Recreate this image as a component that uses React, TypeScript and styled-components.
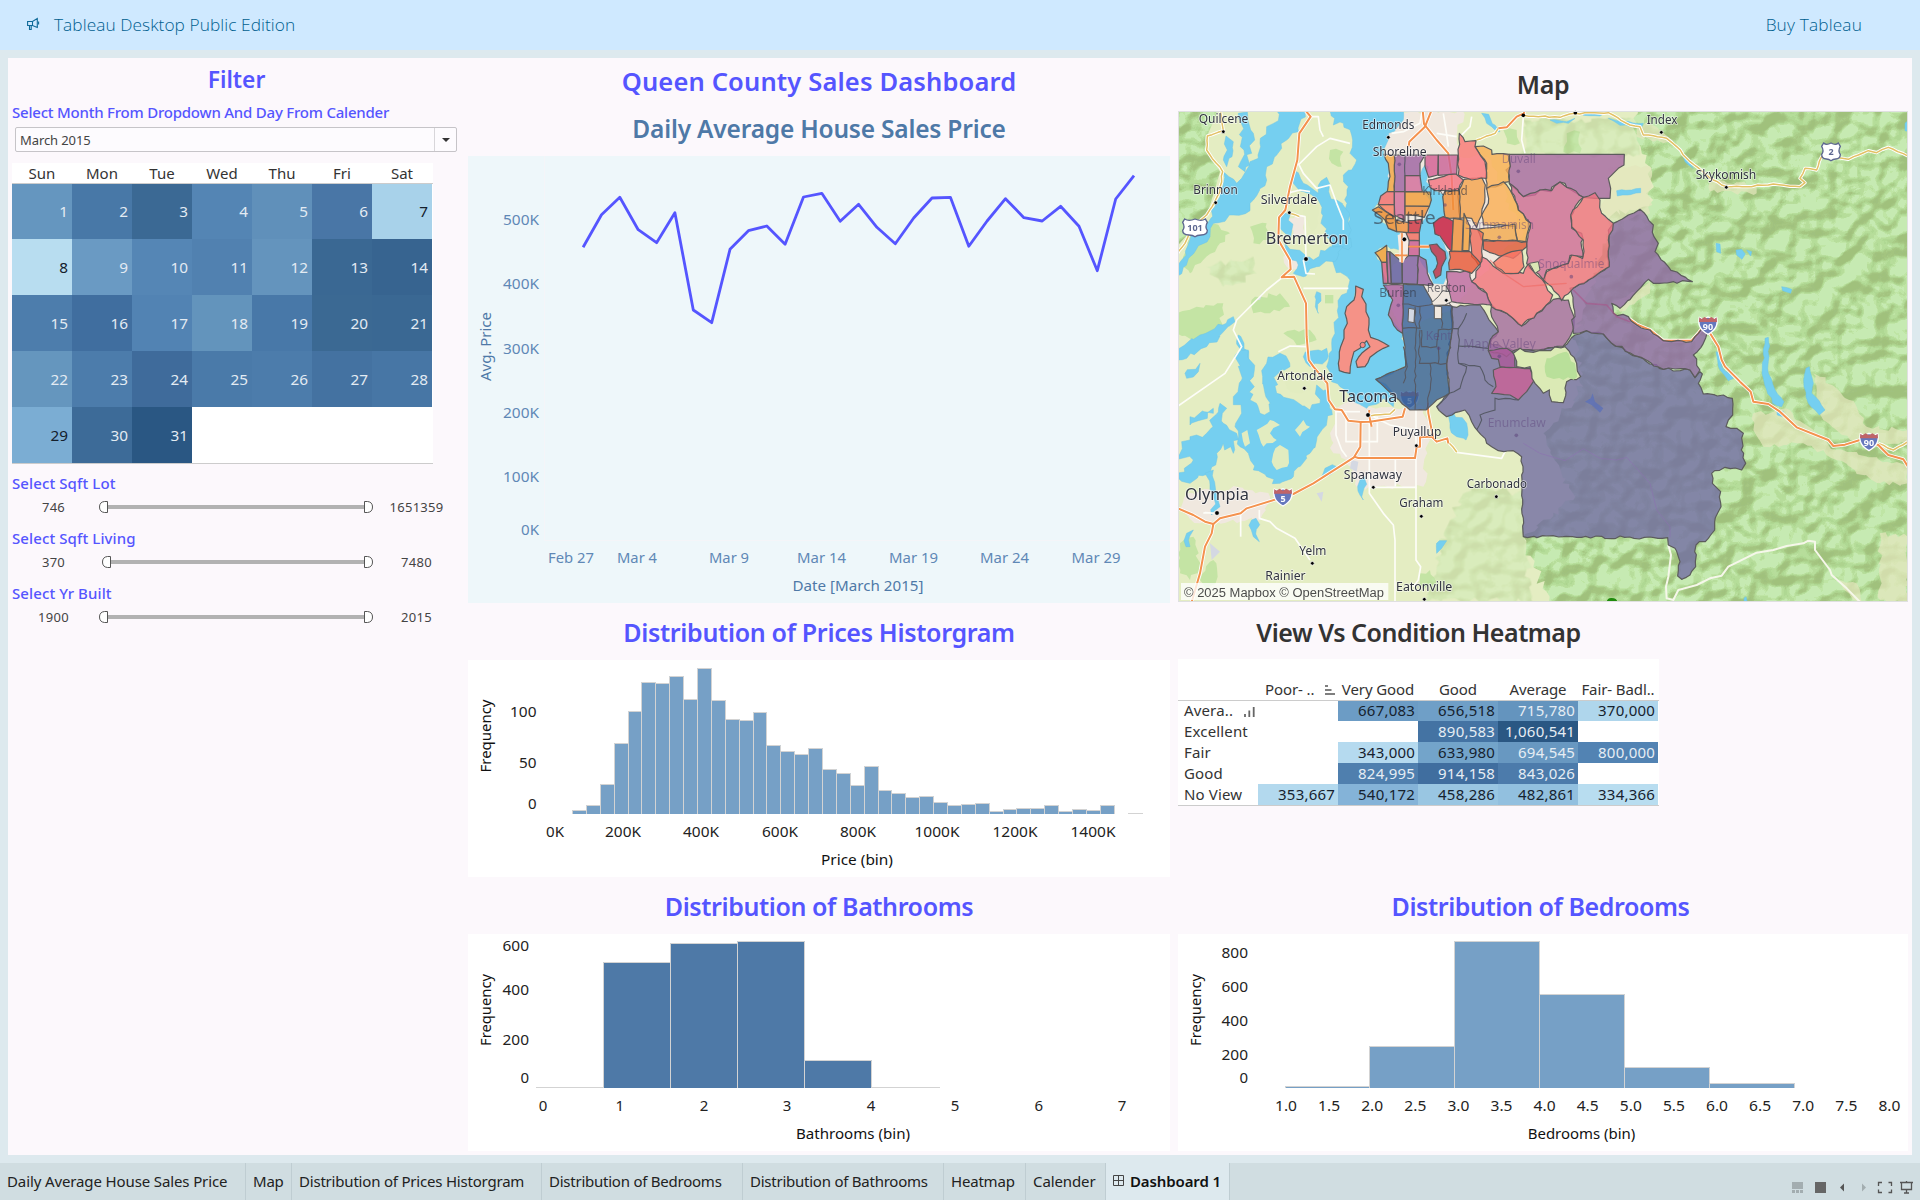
import React from "react";
import styled, { createGlobalStyle } from "styled-components";

const FONT = '"Noto Sans", "Open Sans", sans-serif';
const VIOLET = "#5555ff";
const STEEL = "#4e79a7";

const GlobalStyle = createGlobalStyle`
  * { box-sizing: border-box; }
  body { margin: 0; background: #dde9ee; font-family: ${FONT}; color: #333; }
  svg { display: block; }
`;

/* ---------- shell ---------- */

const Page = styled.div`
  display: flex;
  flex-direction: column;
  width: 1920px;
  height: 1200px;
  overflow: hidden;
  background: #dde9ee;
`;

const Banner = styled.header`
  display: flex;
  align-items: center;
  height: 50px;
  padding: 0 58px 2px 27px;
  background: #cfe9ff;
  color: #005f8f;
  font-family: "Open Sans", ${FONT};
  font-size: 17.3px;
  font-weight: 300;
  svg { margin-right: 14px; }
`;

const BannerTitle = styled.span`
  letter-spacing: 0.06px;
`;

const BannerLink = styled.a`
  margin-left: auto;
  letter-spacing: 0.15px;
`;

const Dashboard = styled.main`
  display: flex;
  width: 1904px;
  height: 1097px;
  margin: 8px 8px 0;
  background: #fcf8fc;
`;

const FilterColumn = styled.section`
  width: 460px;
  padding-left: 4px;
`;

const CenterColumn = styled.section`
  display: flex;
  flex-direction: column;
  width: 702px;
`;

const RightColumn = styled.section`
  display: flex;
  flex-direction: column;
  width: 730px;
  margin-left: 8px;
`;

const Title = styled.h2<{ $h: number; $lh: number; $color?: string; $size?: number; $w?: number; $ls?: number; $dx?: number }>`
  flex: none;
  margin: 0;
  height: ${(p) => p.$h}px;
  width: ${(p) => (p.$w ? `${p.$w}px` : "auto")};
  padding-right: ${(p) => p.$dx ?? 0}px;
  line-height: ${(p) => p.$lh}px;
  text-align: center;
  white-space: nowrap;
  font-size: ${(p) => p.$size ?? 25}px;
  font-weight: 600;
  letter-spacing: ${(p) => p.$ls ?? 0}px;
  color: ${(p) => p.$color ?? VIOLET};
`;

/* ---------- filters ---------- */

const FilterLabel = styled.div<{ $h: number; $ls?: number }>`
  height: ${(p) => p.$h}px;
  line-height: ${(p) => p.$h}px;
  font-size: 15px;
  font-weight: 500;
  letter-spacing: ${(p) => p.$ls ?? 0.1}px;
  color: ${VIOLET};
  white-space: nowrap;
`;

const Select = styled.div`
  display: flex;
  align-items: center;
  width: 442px;
  height: 25px;
  margin-left: 3px;
  padding-left: 4px;
  border: 1px solid #c6c4c8;
  border-radius: 2px;
  background: #fdfbfe;
  font-size: 13px;
  letter-spacing: -0.1px;
  color: #444;
`;

const SelectArrow = styled.span`
  display: flex;
  align-items: center;
  justify-content: center;
  width: 22px;
  height: 100%;
  margin-left: auto;
  border-left: 1px solid #d8d6da;
  &::before {
    content: "";
    border: 4px solid transparent;
    border-top-color: #333;
    border-bottom: 0;
  }
`;

const Calendar = styled.div`
  width: 421px;
  margin-top: 11px;
  background: #fff;
  border-bottom: 1px solid #ccc;
`;

const WeekHead = styled.div`
  display: grid;
  grid-template-columns: repeat(7, 60px);
  height: 21px;
  border-bottom: 1px solid #ccc;
  line-height: 21px;
  text-align: center;
  font-size: 15px;
  color: #333;
`;

const Days = styled.div`
  display: grid;
  grid-template-columns: repeat(7, 60px);
  grid-template-rows: 55px repeat(4, 56px);
`;

const Day = styled.div<{ $bg: string; $dark?: boolean }>`
  display: flex;
  align-items: center;
  justify-content: flex-end;
  padding: 0 4px 1px 0;
  background: ${(p) => p.$bg};
  color: ${(p) => (p.$dark ? "#14202c" : "#e3ebf3")};
  font-size: 15.3px;
`;

const Sliders = styled.div`
  display: flex;
  flex-direction: column;
  gap: 7px;
  padding-top: 7px;
`;

const SliderRow = styled.div`
  display: grid;
  grid-template-columns: 83px 282px 79px;
  align-items: center;
  height: 24px;
  text-align: center;
  font-size: 13px;
  letter-spacing: 0.3px;
  color: #444;
`;

/* ---------- panels ---------- */

const Panel = styled.div<{ $bg?: string; $h: number }>`
  flex: none;
  height: ${(p) => p.$h}px;
  background: ${(p) => p.$bg ?? "#fff"};
`;

const MapSvg = styled.svg`
  overflow: visible;
`;

const Heat = styled.div`
  width: 481px;
  height: 147px;
  padding-top: 21px;
  margin-bottom: 71px;
  background: #fff;
  border-bottom: 1px solid #ccc;
  font-size: 15px;
  color: #333;
`;

const HeatHead = styled.div`
  display: grid;
  grid-template-columns: repeat(6, 80px);
  height: 21px;
  border-bottom: 1px solid #ccc;
  line-height: 19px;
  text-align: center;
  white-space: nowrap;
  letter-spacing: -0.1px;
`;

const HeadSort = styled.span`
  display: flex;
  justify-content: space-between;
  align-items: center;
  height: 19px;
  padding: 0 3px 0 7px;
`;

const HeatRow = styled.div<{ $first: boolean }>`
  display: grid;
  grid-template-columns: repeat(6, 80px);
  height: ${(p) => (p.$first ? 20 : 21)}px;
  line-height: ${(p) => (p.$first ? 18 : 20)}px;
`;

const HeatName = styled.span`
  display: flex;
  justify-content: space-between;
  padding: 0 3px 0 6px;
  white-space: nowrap;
  letter-spacing: 0.15px;
  svg { margin-top: 5px; }
`;

const HeatCell = styled.span<{ $bg?: string; $light?: boolean }>`
  padding-right: 3px;
  text-align: right;
  background: ${(p) => p.$bg ?? "transparent"};
  color: ${(p) => (p.$light ? "#e6edf4" : "#16222e")};
  letter-spacing: 0.2px;
`;

/* ---------- sheet tabs ---------- */

const TabBar = styled.nav`
  display: flex;
  height: 37px;
  margin-top: 8px;
  background: #d0dde1;
`;

const Tab = styled.div<{ $w: number; $active?: boolean; $ls?: number }>`
  display: flex;
  align-items: center;
  width: ${(p) => p.$w}px;
  height: 37px;
  padding: 0 0 1px 7px;
  border-right: 1px solid #bfcdd2;
  background: ${(p) => (p.$active ? "#dde9ee" : "transparent")};
  font-size: 15px;
  font-weight: ${(p) => (p.$active ? 600 : 400)};
  letter-spacing: ${(p) => p.$ls ?? -0.2}px;
  white-space: nowrap;
  color: ${(p) => (p.$active ? "#111" : "#222")};
  svg { margin-right: 5px; }
`;

const TabTools = styled.div`
  margin-left: auto;
  padding-top: 17px;
`;

/* ---------- chart text ---------- */

type TProps = { x: number; y: number; w?: number; fill?: string; size?: number; anchor?: "start" | "middle" | "end"; weight?: number; children: React.ReactNode };
const T = ({ x, y, w, fill = "#222", size = 15, anchor = "middle", weight = 400, children }: TProps) => (
  <text x={x} y={y} fill={fill} fontSize={size} fontWeight={weight} textAnchor={anchor} fontFamily={FONT}
    {...(w ? { textLength: w, lengthAdjust: "spacingAndGlyphs" } : {})}>{children}</text>
);
const VT = ({ x, y, w, fill = "#111", children }: { x: number; y: number; w: number; fill?: string; children: React.ReactNode }) => (
  <text transform={`translate(${x} ${y}) rotate(-90)`} fill={fill} fontSize={15} textAnchor="middle" fontFamily={FONT}
    textLength={w} lengthAdjust="spacingAndGlyphs">{children}</text>
);

/* ---------- charts ---------- */

const lineRaw = [592, 494, 442, 539, 578, 488, 780, 818, 598, 542, 528, 583, 441, 430, 514, 463, 532, 581, 504, 444, 442, 589, 513, 446, 503, 513, 469, 529, 662, 447, 377];

const LineChart = () => {
  const c = "#5f88b6";
  const pts = lineRaw.map((v, i) => `${(115.1 + i * 18.365).toFixed(1)},${(v / 3 - 106).toFixed(1)}`).join(" ");
  return (
    <svg width="702" height="447" viewBox="0 0 702 447">
      <path d="M76.5 0V384.5H702" fill="none" stroke="#f4f5f8" />
      <polyline points={pts} fill="none" stroke={VIOLET} strokeWidth="2.8" strokeLinejoin="round" />
      {[["500K", 68.7], ["400K", 132.7], ["300K", 198], ["200K", 262], ["100K", 326]].map(([t, y]) => (
        <T key={t} x={71} y={y as number} w={36} fill={c} anchor="end">{t}</T>
      ))}
      <T x={71} y={379} w={18} fill={c} anchor="end">0K</T>
      {([["Feb 27", 103, 46], ["Mar 4", 169, 40], ["Mar 9", 261, 40], ["Mar 14", 353.5, 49], ["Mar 19", 445.5, 49], ["Mar 24", 536.5, 49], ["Mar 29", 628, 49]] as [string, number, number][]).map(([t, x, w]) => (
        <T key={t} x={x} y={407.3} w={w} fill={c}>{t}</T>
      ))}
      <T x={390} y={435.3} w={131} fill={STEEL}>Date [March 2015]</T>
      <VT x={23} y={190.5} w={69} fill={STEEL}>Avg. Price</VT>
    </svg>
  );
};

const Bars = ({ xs, tops, base, fill }: { xs: number[]; tops: number[]; base: number; fill: string }) => (
  <g>
    {tops.map((t, i) => (
      <g key={i}>
        <rect x={xs[i]} y={t} width={xs[i + 1] - xs[i]} height={base - t} fill={fill} />
        <path d={`M${xs[i]} ${base}V${t + 0.5}H${xs[i + 1]}V${base}`} fill="none" stroke="#d3d3d3" />
      </g>
    ))}
  </g>
);

const priceRaw = [602, 587, 523, 401, 304, 217, 220, 199, 268, 176, 272, 328, 331, 308, 406, 425, 434, 416, 478, 490, 526, 469, 542, 550, 562, 559, 577, 587, 584, 580, 605, 598, 595, 595, 587, 605, 598, 601, 587];

const PriceChart = () => (
  <svg width="702" height="217" viewBox="0 0 702 217">
    <Bars xs={Array.from({ length: 40 }, (_, i) => Math.round(104 + i * 13.89) + 0.5)} tops={priceRaw.map((v) => Math.round((v - 1) / 3 - 50))} base={154} fill="#76a0c6" />
    <path d="M660 153.5H675" stroke="#d3d3d3" />
    <T x={68.5} y={56.7} w={26.5} anchor="end">100</T>
    <T x={68.5} y={108} w={17.5} anchor="end">50</T>
    <T x={68.5} y={149} anchor="end">0</T>
    {([["0K", 87, 18], ["200K", 155, 36], ["400K", 233, 36], ["600K", 312, 36], ["800K", 390, 36], ["1000K", 469, 45], ["1200K", 547, 45], ["1400K", 625, 45]] as [string, number, number][]).map(([t, x, w]) => (
      <T key={t} x={x} y={177.3} w={w}>{t}</T>
    ))}
    <T x={389} y={205} w={72} fill="#111">Price (bin)</T>
    <VT x={23} y={76} w={73}>Frequency</VT>
  </svg>
);

const BathChart = () => (
  <svg width="702" height="217" viewBox="0 0 702 217">
    <path d="M68 153.5H135M403 153.5H472" stroke="#d3d3d3" />
    <Bars xs={[135.5, 202.5, 269.5, 336.5, 403.5]} tops={[28, 9, 7, 126]} base={154} fill={STEEL} />
    {([["600", 17], ["400", 60.7], ["200", 111.3]] as [string, number][]).map(([t, y]) => <T key={t} x={61} y={y} w={26.5} anchor="end">{t}</T>)}
    <T x={61} y={148.7} anchor="end">0</T>
    {[75, 151.7, 236, 319, 403, 487, 570.7, 654].map((x, i) => <T key={i} x={x} y={177}>{i}</T>)}
    <T x={385} y={205.3} w={114} fill="#111">Bathrooms (bin)</T>
    <VT x={23} y={76} w={72}>Frequency</VT>
  </svg>
);

const BedChart = () => (
  <svg width="730" height="217" viewBox="0 0 730 217">
    <Bars xs={[107.5, 191.5, 276.5, 361.5, 446.5, 531.5, 616.5]} tops={[152, 112, 7, 60, 133, 149]} base={154} fill="#76a0c6" />
    {([["800", 24], ["600", 58], ["400", 92], ["200", 126]] as [string, number][]).map(([t, y]) => <T key={t} x={70} y={y} w={26.5} anchor="end">{t}</T>)}
    <T x={70} y={148.7} anchor="end">0</T>
    {Array.from({ length: 15 }, (_, i) => <T key={i} x={108 + i * 43.1} y={177} w={22}>{(1 + i * 0.5).toFixed(1)}</T>)}
    <T x={403.5} y={205.3} w={107.5} fill="#111">Bedrooms (bin)</T>
    <VT x={22.5} y={76} w={72}>Frequency</VT>
  </svg>
);

/* ---------- map ---------- */

/* Splits every edge of a polygon and nudges the new points, so that shores and borders look surveyed. */
const rough = (src: string, amp = 7, close = true) => {
  const p = src.trim().split(/\s+/).map((s) => s.split(",").map(Number));
  let seed = p.length * 977 + Math.round(p[0][0]) * 31;
  const rnd = () => {
    seed = (seed * 1103515245 + 12345) & 0x7fffffff;
    return (seed >> 8) / 0x7fffff - 0.5;
  };
  const out: string[] = [];
  const n = close ? p.length : p.length - 1;
  for (let i = 0; i < n; i++) {
    const a = p[i], b = p[(i + 1) % p.length];
    const len = Math.hypot(b[0] - a[0], b[1] - a[1]);
    const k = Math.max(1, Math.floor(len / 14));
    for (let j = 0; j < k; j++) {
      const t = j / k;
      const d = j === 0 ? 0 : amp;
      out.push(`${(a[0] + (b[0] - a[0]) * t + rnd() * d * 2).toFixed(0)},${(a[1] + (b[1] - a[1]) * t + rnd() * d * 2).toFixed(0)}`);
    }
  }
  if (!close) out.push(p[p.length - 1].join(","));
  return out.join(" ");
};

const waters = [
  // main sound
  "480,30 490,75 520,70 545,105 540,160 560,180 545,210 520,225 535,260 525,330 540,360 530,400 540,440 500,440 490,475 495,505 540,540 535,560 515,585 505,620 495,700 478,760 470,800 485,845 510,860 545,900 590,925 640,895 670,920 672,880 620,838 707,800 705,730 690,690 655,645 665,600 650,560 640,520 632,485 615,458 650,436 690,450 690,400 645,372 607,330 630,300 655,260 655,200 640,165 650,130 655,100 685,78 700,60 700,30",
  // hood canal
  "318,30 325,62 290,80 270,130 265,175 240,185 215,235 200,250 160,215 158,262 135,320 112,372 60,420 35,480 20,500 20,530 60,470 120,410 130,370 190,345 240,332 250,300 290,240 290,200 320,165 350,120 385,95 405,30",
  "168,108 190,125 186,170 170,200 160,180 172,150",
  "205,40 232,36 250,100 245,160 225,215 205,200 222,150",
  // kitsap inlets
  "372,212 400,250 445,280 470,232 476,275 500,300 530,330 545,440 500,450 455,360 445,300 400,275 370,250",
  "335,335 360,345 362,410 345,400 330,370",
  "345,430 380,450 430,480 480,440 520,440 500,480 440,500 400,530 370,520 385,495 350,470",
  "440,575 452,580 445,640 436,620",
  "205,705 222,730 240,790 215,780",
  "20,750 90,705 190,650 195,665 110,740 50,775 20,780",
  "400,770 470,745 470,780 420,800",
  // south sound
  "290,790 330,760 360,800 310,830 320,880 380,905 420,930 450,910 440,855 465,870 485,930 470,970 440,1020 420,1060 370,1130 330,1150 290,1130 250,1110 235,1060 210,1040 195,980 215,940 190,890 215,840 200,760 235,750 250,830 240,900 270,940 300,935 285,880 278,830",
  "20,1070 60,1010 110,1000 150,910 170,925 160,970 200,1000 190,1060 160,1030 140,1060 120,1120 60,1150 20,1130 70,1080",
  "105,1120 130,1110 140,1180 150,1220 125,1245 130,1180",
  "60,950 130,925 130,940 60,975",
  "45,820 90,790 85,815 50,835",
  "450,1140 465,1105 500,1100 480,1125",
  "570,1140 585,1130 580,1200 570,1185",
  "245,1260 258,1255 268,1325 250,1310",
  "50,1300 70,1290 60,1340 48,1340",
  "800,1360 800,1330 830,1322 815,1345",
  "835,945 850,938 890,970 888,1020 860,1010 840,970",
  "935,40 975,75 990,95 950,70",
];

const lakes = [
  "1340,272 1412,265 1412,278 1342,288",
  "1638,430 1650,432 1652,460 1640,455",
  "1698,450 1715,448 1726,462 1716,478 1700,465",
  "1730,450 1745,455 1742,468",
  "1835,560 1865,568 1862,580 1838,572",
  "1785,715 1795,712 1797,770 1795,820 1815,870 1842,905 1835,920 1808,910 1790,870 1776,820",
  "1908,805 1918,800 1930,850 1925,880 1965,930 1948,945 1915,910 1902,860",
  "1638,755 1650,760 1655,800 1690,835 1675,842 1650,810",
  "1820,930 1840,935 1838,950 1822,945",
  "1315,55 1340,62 1420,70 1415,80 1350,76",
  "1140,60 1190,65 1215,55 1195,70 1160,70",
  "1240,40 1300,42 1290,48 1240,46",
  "1530,150 1560,190 1570,205 1545,185",
  "2205,70 2216,60 2216,95 2205,92",
  "1722,1495 1728,1490 1732,1506 1722,1506",
];

const islands = [
  "345,840 400,822 425,870 380,880 350,865",
  "310,1060 330,1035 355,1050 352,1100 320,1110 305,1085",
  "260,990 300,960 330,975 300,1000 320,1020 280,1040",
  "375,990 400,960 420,980 390,1010",
  "395,290 440,310 445,370 425,395 400,350",
  "215,1000 232,990 240,1030 225,1040",
];

const VASHON = "557,558 580,568 575,590 588,612 588,635 597,655 595,690 602,712 625,720 657,738 622,755 600,772 585,800 562,802 558,785 575,760 600,740 590,722 570,745 552,755 545,780 540,820 508,812 505,790 512,740 522,715 522,690 532,670 525,640 530,620 552,600";

const whiteRoads = [
  "400,480 408,520 435,522", "408,475 405,350 380,345", "385,195 440,140 480,115 540,130",
  "400,565 535,565", "340,530 290,570 200,660 190,690 215,740 165,820 24,918",
  "385,190 400,220 440,265 480,255 500,310 520,360 520,390",
  "350,280 390,270 420,275", "325,755 360,738 408,740",
  "498,930 498,1005 515,1050 530,1070", "528,940 528,1025 622,1025 622,950", "598,960 598,1180 640,1240 670,1275 675,1320 675,1506",
  "738,930 738,1380 752,1400 745,1440 730,1460", "598,1162 740,1162", "676,1080 676,1160", "860,1057 995,1075 1005,1055",
  "100,1240 105,1238 140,1240", "212,1230 212,1310", "268,1230 268,1255 300,1265 320,1285 375,1315 420,1380",
  "600,945 660,975 740,990", "495,935 570,935", "820,40 828,90 835,140", "870,110 900,80 905,50",
  "755,40 750,70 700,95 665,100", "1060,50 1055,120 1065,160", "800,100 860,110",
  "415,50 445,50 450,90 460,110",
];

const eastRoads = [
  "1495,1335 1503,1365 1495,1430 1488,1460 1490,1495 1510,1500 1525,1470 1580,1455 1620,1435 1655,1427 1675,1400 1760,1358 1810,1350 1850,1338 1900,1330 1915,1322 1935,1325 1935,1350 1980,1410 1985,1425 2030,1465 2070,1506",
];

const yellowRoads = [
  "150,30 160,92 112,108 110,150 158,215 150,275 110,345 60,392 45,430 20,465",
  "600,948 660,942 675,928", "360,340 388,350", "920,120 975,100 985,85",
  "1060,46 1170,52 1215,40 1315,38 1380,75 1410,80 1420,105 1490,115 1520,140 1560,185 1630,240 1670,260 1730,260 1810,252 1890,260 1905,248 1890,235 1905,205 1940,210 1955,170 2035,178 2095,152 2120,158 2155,142 2214,168",
  "2125,1030 2170,1050 2214,1025", "838,1030 860,1056",
];

const orangeRoads = [
  "758,30 762,72 800,120 835,160 845,230 850,330", "785,30 765,80 718,125 716,140",
  "985,85 1010,82 1040,50 1062,40 1062,30",
  "405,30 422,50 388,100 382,180 360,260 346,330 327,352 325,420 360,480 362,508 335,532 372,530 408,610 410,710 416,780 430,800 472,850 476,900 495,928 515,930 535,962 572,966",
  "705,925 698,950 600,965 572,966 571,1040 552,1072 430,1150 370,1182 230,1225 212,1240 150,1255 130,1272 105,1265 70,1245 24,1225",
  "130,1272 125,1300 105,1340 90,1420 65,1506",
  "552,1070 565,1074 735,1074 740,1040 750,1040 750,1012 785,1010 800,1025 832,1015 835,1030",
  "773,908 775,940 787,1000 790,1012", "597,945 605,980", "598,930 597,945",
  "715,440 778,440", "695,400 695,490", "675,466 712,466",
  "1375,655 1400,673 1440,690 1480,722 1565,722 1585,700 1600,680",
  "1620,700 1645,740 1655,780 1665,800 1710,845 1742,875 1750,905 1795,912 1830,935 1880,982 1975,1020 1990,1038 2025,1034 2070,1020 2125,1035 2155,1065 2200,1078 2214,1100",
];

type Region = { f: string; p: string; r?: number };
const regions: Region[] = [
  { f: "#726da2", r: 6, p: "800,920 830,950 885,930 905,965 925,995 950,1030 985,1052 1030,1052 1055,1070 1060,1310 1220,1312 1493,1313 1495,1335 1515,1345 1530,1385 1523,1428 1535,1438 1560,1425 1577,1400 1578,1335 1615,1315 1634,1290 1634,1265 1653,1220 1652,1175 1627,1150 1625,1120 1665,1102 1715,1110 1727,1090 1714,1050 1720,1000 1700,985 1668,980 1688,945 1687,895 1660,885 1600,882 1585,850 1597,822 1590,815 1575,833 1560,810 1480,808 1405,770 1325,730 1300,702 1250,692 1215,705 1180,740 1090,752 1030,752 960,730 985,695 930,615 845,620 845,700 830,790 838,880" },
  { f: "#355f97", r: 2, p: "700,552 760,556 790,612 846,618 848,685 830,790 838,880 800,900 768,930 720,930 617,838 707,800 705,740 697,690" },
  { f: "#a36a9f", r: 6, p: "1055,678 1100,640 1150,598 1195,600 1212,650 1205,700 1180,738 1090,750 1030,752 1010,770 955,752 960,720 985,695 965,650 965,615 1010,640" },
  { f: "#8d68a4", r: 6, p: "1330,370 1375,345 1410,328 1450,375 1452,410 1465,430 1455,455 1495,500 1567,545 1450,550 1435,538 1400,575 1350,625 1325,610 1330,640 1375,650 1400,675 1440,690 1480,722 1565,725 1585,700 1605,680 1615,690 1600,730 1570,765 1590,810 1575,833 1560,810 1480,808 1405,770 1325,730 1300,702 1250,692 1210,700 1205,660 1215,650 1205,580 1200,565 1250,545 1315,500 1315,390" },
  { f: "#a668a2", p: "1018,163 1363,163 1362,195 1345,205 1315,235 1322,265 1320,295 1275,295 1240,292 1228,285 1190,262 1185,250 1170,246 1145,262 1142,275 1110,270 1095,285 1060,290 1040,270 1018,250 1018,225 1008,210 1020,200" },
  { f: "#d06a98", r: 6, p: "1018,250 1060,290 1110,270 1145,272 1170,246 1190,262 1240,292 1215,320 1202,350 1205,385 1235,400 1240,470 1200,466 1195,490 1130,510 1125,545 1095,515 1070,490 1070,430 1082,370 1045,330" },
  { f: "#f0727f", r: 6, p: "1240,292 1275,278 1290,300 1295,340 1330,370 1315,420 1318,500 1255,540 1210,565 1175,602 1145,560 1120,540 1130,515 1195,490 1205,465 1238,475 1240,420 1205,380 1202,345" },
  { f: "#f4727f", r: 6, p: "935,470 1000,520 1060,520 1075,492 1100,525 1125,550 1148,585 1140,605 1100,640 1055,678 1010,640 965,620 950,580 905,545 930,500" },
  { f: "#bd689f", r: 4, p: "830,515 900,515 905,545 950,580 965,615 880,610 845,605 830,560" },
  { f: "#fbae52", r: 4, p: "915,140 940,138 965,150 966,163 1018,163 1018,245 950,267 950,190" },
  { f: "#fbae52", r: 5, p: "950,265 1000,245 1020,270 1045,330 1082,370 1068,425 1042,422 1035,378 940,375 935,345 955,310" },
  { f: "#f3a94c", r: 3, p: "922,388 1035,372 1042,422 935,420" },
  { f: "#f5a24b", r: 4, p: "866,272 882,238 905,235 935,232 946,255 945,290 935,345 920,382 905,355 870,355" },
  { f: "#f08f38", r: 3, p: "818,290 825,273 868,272 870,355 825,352" },
  { f: "#fb7579", r: 4, p: "868,100 885,125 918,122 915,140 945,185 950,235 905,240 865,225 865,165" },
  { f: "#f4727f", r: 4, p: "775,240 855,220 880,240 865,272 795,272 780,262" },
  { f: "#d35b91", p: "765,165 805,165 803,225 776,232 765,200" },
  { f: "#c96095", p: "805,165 863,165 860,222 805,226" },
  { f: "#9c60a0", p: "673,165 765,165 750,190 750,227 705,227 705,275 673,275" },
  { f: "#f2a540", r: 3, p: "642,163 673,165 673,275 652,275 660,230 655,190" },
  { f: "#d26a98", p: "705,227 750,227 757,275 705,275" },
  { f: "#f46a72", p: "632,288 650,275 673,275 673,314 625,314" },
  { f: "#fb7b62", p: "625,314 673,314 676,352 645,332" },
  { f: "#d26a98", p: "673,275 705,275 705,362 673,345" },
  { f: "#f29c36", p: "705,275 780,276 784,300 778,319 705,318" },
  { f: "#ef8830", r: 2, p: "607,330 625,320 676,352 680,395 655,385 645,360" },
  { f: "#f08f38", p: "705,318 778,319 763,352 740,347 705,345" },
  { f: "#f08f38", p: "676,360 715,368 715,398 680,395" },
  { f: "#d0303e", r: 2, p: "715,362 755,358 748,398 715,398" },
  { f: "#f26a5c", p: "708,398 748,398 748,422 717,420" },
  { f: "#c9588e", p: "717,422 748,422 748,467 715,467" },
  { f: "#f29c36", r: 2, p: "615,458 650,436 650,487 635,487" },
  { f: "#dc5b86", p: "635,487 650,487 654,550 640,550" },
  { f: "#ac5a9a", p: "650,455 658,455 664,550 654,550" },
  { f: "#5a589c", p: "660,455 695,485 697,550 664,550" },
  { f: "#7d5ca0", p: "697,485 715,467 745,467 742,553 697,550" },
  { f: "#9c60a0", r: 3, p: "745,467 768,480 772,520 790,555 742,553" },
  { f: "#a85c9e", r: 3, p: "640,555 700,555 697,700 682,690 655,645 668,600" },
  { f: "#c4153a", r: 3, p: "808,355 820,350 850,364 845,455 825,430 810,408 795,402 790,370" },
  { f: "#ef8f38", p: "850,355 880,360 876,455 845,455" },
  { f: "#f2a03a", p: "882,340 900,380 897,452 878,452" },
  { f: "#f06a5a", r: 3, p: "900,385 922,388 940,400 935,485 925,495 905,470" },
  { f: "#e85634", r: 4, p: "838,455 900,455 932,490 905,520 870,508 838,510" },
  { f: "#e0563a", r: 4, p: "940,422 1070,425 1070,440 1030,475 975,462 940,448" },
  { f: "#fb7568", r: 4, p: "1000,465 1055,450 1062,500 1045,520 1005,520 970,488" },
  { f: "#d0303e", r: 3, p: "778,435 800,432 825,455 828,475 815,500 812,525 797,535 790,515 803,490 798,470 785,455" },
  { f: "#fa7c78", r: 3, p: VASHON },
  { f: "#cb6296", r: 3, p: "970,810 1000,800 1080,805 1095,835 1080,860 1045,900 1020,885 965,880 978,860" },
  { f: "#ac5a9a", r: 3, p: "955,752 1010,745 1035,765 1035,802 990,800 985,778 965,775" },
];

const innerBorders = [
  "697,612 745,620 790,612", "735,620 738,700 735,930", "697,685 750,685 750,620", "755,690 755,740 800,740 805,690 865,686",
  "750,690 748,790 830,790", "805,740 805,790", "780,790 782,850 770,930", "700,740 712,800 700,850", "815,640 815,685",
  "865,686 866,790 890,800 870,865 838,880", "865,738 955,745", "866,790 930,800 945,840 970,860",
  "920,990 935,960 930,945 975,930 975,895 1045,900", "848,618 848,685 865,686 890,640", "820,590 845,620",
  "800,920 838,880", "705,165 705,227",
];

type Label = [string, number, number, number, number, (number | null)?, (number | null)?];
const labels: Label[] = [
  ["Quilcene", 86, 235, 68, 39, 160, 95], ["Brinnon", 70, 203, 283, 39, 137, 308], ["Silverdale", 272, 442, 311, 39, 358, 338],
  ["Bremerton", 287, 535, 433, 49, 408, 477], ["Edmonds", 577, 733, 87, 39, 655, 112], ["Shoreline", 608, 770, 168, 39, 688, 193],
  ["Kirkland", 757, 893, 286, 39, 825, 315], ["Seattle", 610, 797, 373, 55, 703, 418], ["Sammamish", 885, 1092, 387, 39, 988, 412],
  ["Duvall", 995, 1097, 189, 39, 1045, 214], ["Renton", 770, 888, 576, 39, 829, 601], ["Burien", 628, 740, 591, 39, 685, 616],
  ["Kent", 767, 845, 720, 39, 806, 745], ["Maple Valley", 880, 1097, 744, 39, 988, 769], ["Snoqualmie", 1105, 1303, 503, 39, 1204, 530],
  ["Index", 1430, 1522, 72, 39, 1474, 97], ["Skykomish", 1577, 1759, 237, 39, 1669, 262], ["Artondale", 322, 489, 840, 39, 403, 865],
  ["Tacoma", 508, 682, 905, 49, 594, 945], ["Puyallup", 668, 814, 1009, 39, 739, 1037], ["Spanaway", 521, 696, 1137, 39, 610, 1162],
  ["Olympia", 45, 237, 1200, 50, 141, 1239], ["Graham", 688, 820, 1222, 39, 754, 1249], ["Carbonado", 890, 1071, 1164, 39, 979, 1190],
  ["Enumclaw", 953, 1127, 981, 39, 1039, 1006], ["Yelm", 388, 469, 1365, 39, 427, 1390], ["Rainier", 286, 407, 1440, 39, null, null],
  ["Eatonville", 678, 847, 1472, 39, 763, 1498],
];

const Interstate = ({ x, y, n }: { x: number; y: number; n: string }) => (
  <g transform={`translate(${x} ${y})`}>
    <path d="M-26-25 L-14-20 L0-26 L14-20 L26-25 Q34 8 0 26 Q-34 8 -26-25Z" fill="#6577bd" stroke="#fff" strokeWidth="4" />
    <path d="M-26-25 L-20-20 L-10-26 L0-20 L10-26 L20-20 L26-25 L27-11H-27Z" fill="#bf6468" />
    <text y="13" textAnchor="middle" fontSize="27" fontWeight="700" fill="#fff" fontFamily={FONT}>{n}</text>
  </g>
);

const UsRoute = ({ x, y, w, n }: { x: number; y: number; w: number; n: string }) => (
  <g transform={`translate(${x} ${y})`}>
    <path d={`M${-w + 6}-26 Q${-w / 2}-18 0-26 Q${w / 2}-18 ${w - 6}-26 L${w}-16 Q${w - 8}-2 ${w} 8 Q${w} 22 ${w / 2} 22 Q6 22 0 27 Q-6 22 ${-w / 2} 22 Q${-w} 22 ${-w} 8 Q${-w + 8}-2 ${-w}-16Z`} fill="#fff" stroke="#5d6790" strokeWidth="4" />
    <text y="10" textAnchor="middle" fontSize="27" fontWeight="700" fill="#5d6790" fontFamily={FONT}>{n}</text>
  </g>
);

const EAST = "1395,20 2230,20 2230,1520 1140,1520 1090,1400 1060,1310 1210,1200 1120,1000 1240,860 1210,720 1250,600 1310,430 1320,350 1440,310 1440,200 1400,120";

const MapView = () => (
  <MapSvg width="730" height="491" viewBox="24 33 2190 1473">
    <defs>
      <clipPath id="frame"><rect x="24" y="33" width="2190" height="1473" /></clipPath>
      <filter id="relief" x="0" y="0" width="1" height="1" colorInterpolationFilters="sRGB">
        <feTurbulence type="fractalNoise" baseFrequency="0.015 0.016" numOctaves="2" seed="23" result="n" />
        <feColorMatrix in="n" type="matrix" values="0 0 0 0 0  0 0 0 0 0  0 0 0 0 0  1 0 0 0 0" result="h" />
        <feDiffuseLighting in="h" surfaceScale="42" diffuseConstant="1.08" lightingColor="#ffffff" result="l">
          <feDistantLight azimuth="235" elevation="52" />
        </feDiffuseLighting>
        <feComponentTransfer in="l" result="c">
          <feFuncR type="discrete" tableValues="0.63 0.63 0.63 0.64 0.65 0.66 0.68 0.69 0.71 0.72 0.75 0.78" />
          <feFuncG type="discrete" tableValues="0.76 0.76 0.76 0.77 0.78 0.80 0.83 0.85 0.87 0.87 0.90 0.92" />
          <feFuncB type="discrete" tableValues="0.49 0.49 0.50 0.50 0.51 0.53 0.56 0.58 0.60 0.61 0.65 0.70" />
        </feComponentTransfer>
        <feComposite in="c" in2="SourceAlpha" operator="in" />
      </filter>
    </defs>

    <g clipPath="url(#frame)">
      <rect x="24" y="33" width="2190" height="1473" fill="#e4edc2" />

      {/* forest, fields and towns */}
      <g fill="#c4e4a4">
        <polygon points={rough("20,640 80,620 160,610 150,690 90,720 20,700")} />
        <polygon points={rough("245,600 330,580 360,620 300,640 250,640")} />
        <polygon points={rough("480,150 520,155 515,200 485,190")} />
        <polygon points={rough("340,700 420,690 440,720 380,735")} />
        <polygon points={rough("60,330 180,400 150,430 60,520 40,500")} />
        <polygon points={rough("240,380 290,370 300,420 250,430")} />
        <polygon points={rough("465,585 490,585 490,610 465,610")} />
        <polygon points={rough("30,1330 70,1310 90,1400 60,1440 30,1420")} />
        <polygon points={rough("90,1440 130,1380 140,1440 110,1470")} />
        <polygon points={rough("750,1420 780,1410 800,1450 760,1470")} />
        <polygon points={rough("1000,90 1040,90 1050,130 1010,130")} />
        <polygon points={rough("1190,100 1230,95 1230,160 1180,155")} />
      </g>
      <g fill="#f0e8df">
        <polygon points={rough("655,60 720,36 880,36 860,110 865,170 640,170 650,110", 9)} />
        <polygon points={rough("640,170 950,170 1060,400 900,560 860,620 700,700 640,560 700,450", 9)} />
        <polygon points={rough("500,925 560,900 600,920 760,920 780,980 760,1160 560,1160 530,1080 490,1060 480,1000", 9)} />
        <polygon points={rough("50,1180 200,1160 300,1190 270,1260 90,1270 30,1230", 9)} />
        <polygon points={rough("340,470 400,460 410,500 360,510", 5)} />
        <polygon points={rough("355,355 400,345 405,400 370,410", 5)} />
      </g>
      <path d="M120 1330 L150 1355 L125 1380Z M440 1180 L460 1175 L455 1205Z M545 1080 L565 1085 L560 1115 L540 1105Z M260 600 L280 575 L270 600Z" fill="#d4d8e2" />

      {/* mountain country */}
      <g filter="url(#relief)">
        <polygon points={rough(EAST, 14)} />
        <polygon points="20,20 150,20 110,110 110,150 150,215 140,250 110,350 60,395 20,440" />
      </g>
      <g opacity="0.35">
        <polygon points={rough("840,1260 900,1160 1060,1180 1060,1310 1090,1506 760,1506 800,1400", 14)} filter="url(#relief)" />
        <polygon points={rough("110,500 250,470 260,520 160,560", 10)} filter="url(#relief)" />
        <polygon points={rough("1060,60 1400,60 1410,165 1060,165", 10)} filter="url(#relief)" />
      </g>
      <g fill="#e3e6bd" opacity="0.72">
        <polygon points={rough("1320,200 1440,200 1440,340 1325,365 1290,320 1320,270", 8)} />
        <polygon points={rough("1395,70 1460,80 1510,125 1480,130 1400,110", 8)} />
        <polygon points={rough("1750,940 1860,930 1900,970 1960,1020 2000,1050 2214,1100 2214,1150 2130,1150 2000,1080 1900,1030 1780,1040 1755,1000", 8)} />
        <polygon points={rough("1930,820 1950,830 2060,920 2090,980 2214,990 2214,1030 2040,1020 1960,960", 8)} />
        <polygon points={rough("2130,1300 2214,1310 2214,1506 2130,1500", 8)} />
        <polygon points={rough("2010,1440 2060,1450 2075,1506 2050,1500", 6)} />
        <polygon points={rough("1325,608 1345,600 1420,560 1440,545 1440,580 1350,635", 5)} />
        <polygon points={rough("1620,240 1760,255 1760,280 1620,275", 6)} />
      </g>

      {/* water */}
      <g fill="#75cff0" stroke="#6cc4e4" strokeWidth="1.5">
        {waters.map((w, i) => <polygon key={i} points={rough(w, i < 2 ? 7 : 10)} />)}
        {lakes.map((w, i) => <polygon key={i} points={rough(w, 3)} />)}
        <polygon points={rough("765,195 775,200 768,245 790,270 820,285 825,345 795,365 790,390 815,420 835,460 835,520 820,552 790,550 770,510 750,480 748,420 755,370 775,340 780,300 755,270 748,235", 3)} />
      </g>
      <g fill="#e2ecc0">
        {islands.map((w, i) => <polygon key={i} points={rough(w, 6)} />)}
        <polygon points={VASHON} />
      </g>

      {/* roads */}
      <g fill="none" strokeLinejoin="round">
        {whiteRoads.map((r, i) => <polyline key={i} points={r} stroke="#fdfdf8" strokeWidth="5" />)}
        {eastRoads.map((r, i) => <polyline key={i} points={r} stroke="#f6f7ea" strokeWidth="6" />)}
        {yellowRoads.map((r, i) => <polyline key={i} points={rough(r, 2, false)} stroke="#fff" strokeWidth="10" />)}
        {yellowRoads.map((r, i) => <polyline key={i} points={rough(r, 2, false)} stroke="#e3c165" strokeWidth="4.5" />)}
        {orangeRoads.map((r, i) => <polyline key={i} points={r} stroke="#fff" strokeWidth="11" />)}
        {orangeRoads.map((r, i) => <polyline key={i} points={r} stroke="#f4924e" strokeWidth="6" />)}
      </g>
      <Interstate x={719} y={900} n="5" />
    </g>

    {/* sales regions */}
    <g stroke="#5c5c5c" strokeWidth="3.6" strokeLinejoin="round">
      {regions.map((r, i) => <polygon key={i} points={r.r ? rough(r.p, r.r * 0.7) : r.p} fill={r.f} fillOpacity="0.8" />)}
    </g>
    <g fill="none" stroke="#565a66" strokeWidth="3.3">
      {innerBorders.map((b, i) => <polyline key={i} points={rough(b, 3, false)} />)}
    </g>
    <polygon points={rough("1030,760 1050,745 1090,757 1185,740 1220,790 1232,830 1190,845 1180,908 1145,905 1138,870 1120,880 1095,850 1080,800 1040,800", 5)} fill="#dbeab5" stroke="#5c5c5c" strokeWidth="3.6" />
    <polygon points={rough("1130,775 1190,755 1215,790 1222,830 1180,840 1130,830", 6)} fill="#b9e09a" />
    <g stroke="#5c5c5c" strokeWidth="3">
      <polygon points="716,625 734,628 732,668 714,665" fill="#d3d8e4" />
      <polygon points="793,618 815,620 815,656 793,656" fill="#f0e8df" />
      <polygon points="805,590 818,572 838,575 845,605 825,615 790,616 785,608" fill="#f0e8df" />
      <polygon points={rough("1078,490 1105,485 1110,510 1095,520", 4)} fill="#dbe6b5" />
      <polygon points="683,405 700,400 715,425 712,460 700,488 688,486 686,440" fill="#f6ece4" stroke="none" />
      <circle cx="578" cy="735" r="8" fill="#fa8a86" />
    </g>
    <path d="M696 400V488M676 466H712M715 440H778" stroke="#f4924e" strokeWidth="5" fill="none" />
    <g fill="none" stroke="#8d6fb0" strokeWidth="3" opacity="0.55">
      <polyline points="1060,1030 1110,1060 1185,1082 1240,1046 1290,1075 1340,1080 1370,1072 1440,1150 1460,1230 1500,1280 1500,1312" />
    </g>
    <polyline points="960,480 1000,520 1060,560 1120,555 1190,550" fill="none" stroke="#f0645c" strokeWidth="4" opacity="0.5" />
    <polyline points="1210,570 1250,610 1310,615 1340,650 1380,665" fill="none" stroke="#a8558a" strokeWidth="5" opacity="0.6" />
    <path d="M1245 905 L1262 895 L1268 880 L1275 905 L1300 925 L1290 938 L1265 915Z" fill="#5c71b8" opacity="0.8" />

    {/* place names: solid on open ground, faint inside the sales regions */}
    <g fontFamily={FONT} fill="#30333f" strokeLinejoin="round">
      {labels.map(([t, x1, x2, y, s]) => {
        const inside = ["Sammamish", "Duvall", "Kent", "Maple Valley", "Snoqualmie", "Enumclaw"].includes(t);
        const partly = ["Kirkland", "Seattle", "Renton", "Burien"].includes(t);
        return (
          <text key={t} x={x1} y={y} fontSize={s} textLength={x2 - x1} lengthAdjust="spacingAndGlyphs"
            fill={inside ? "#5a3f78" : "#30333f"} opacity={inside ? 0.42 : partly ? 0.62 : 1}
            stroke={inside || partly ? "none" : "#fff"} strokeOpacity="0.6" strokeWidth="5" paintOrder="stroke">{t}</text>
        );
      })}
    </g>
    {labels.map(([t, , , , s, dx, dy]) => {
      if (!dx || !dy) return null;
      const faint = ["Sammamish", "Duvall", "Kent", "Maple Valley", "Snoqualmie", "Enumclaw", "Kirkland", "Burien", "Shoreline"].includes(t);
      return <circle key={t} cx={dx} cy={dy} r={s > 40 ? 7 : 5.5} fill={faint ? "#5a3f78" : "#000"} opacity={faint ? 0.5 : 1} stroke={faint ? "none" : "#fff"} strokeWidth="2" />;
    })}
    <circle cx="1060" cy="46" r="5.5" /><circle cx="1216" cy="38" r="5.5" />

    <Interstate x={1614} y={677} n="90" />
    <Interstate x={2097} y={1026} n="90" />
    <Interstate x={339} y={1192} n="5" />
    <UsRoute x={75} y={383} w={37} n="101" />
    <UsRoute x={1983} y={155} w={28} n="2" />
    <path d="M1310 1506 Q1312 1493 1325 1494 Q1341 1494 1342 1506Z" fill="#1f8a0c" />

    <rect x="33" y="1449" width="622" height="51" fill="#fff" fillOpacity="0.78" />
    <text x="42" y="1490" fontSize="41" fill="#4c4c4c" fontFamily='"Liberation Sans", Arial, sans-serif' textLength="600" lengthAdjust="spacingAndGlyphs">© 2025 Mapbox © OpenStreetMap</text>
    <rect x="25.5" y="34.5" width="2187" height="1470" fill="none" stroke="#dfe0e0" strokeWidth="3" />
  </MapSvg>
);

/* ---------- data for the tables ---------- */

const dayColors = [
  "#6596bf", "#4878a7", "#3b6994", "#5485b4", "#6090ba", "#4976a6", "#a8d2ea",
  "#b8ddf0", "#6a9ac3", "#5586b5", "#5181b0", "#6494bd", "#3a6893", "#376490",
  "#4d7dac", "#406e9f", "#5283b3", "#6394bc", "#4878a8", "#3b6993", "#3a6893",
  "#6596be", "#4c7cab", "#3f6b9b", "#4a7aa9", "#4c7cab", "#4472a1", "#4776a5",
  "#7badd3", "#3d6b98", "#2a5783",
];

type Cell = [string, string, boolean?] | null;
const heatRows: [string, Cell[]][] = [
  ["Avera..", [null, ["667,083", "#6c9cc5"], ["656,518", "#6f9fc7"], ["715,780", "#6494be", true], ["370,000", "#afd6ec"]]],
  ["Excellent", [null, null, ["890,583", "#4473a3", true], ["1,060,541", "#2a5783", true], null]],
  ["Fair", [null, ["343,000", "#b5daef"], ["633,980", "#73a4ca"], ["694,545", "#6898c1", true], ["800,000", "#5283b3", true]]],
  ["Good", [null, ["824,995", "#4f7fae", true], ["914,158", "#406e9f", true], ["843,026", "#4c7bab", true], null]],
  ["No View", [["353,667", "#b3d9ee"], ["540,172", "#84b3d8"], ["458,286", "#99c6e2"], ["482,861", "#92c0df"], ["334,366", "#b8ddf0"]]],
];

const Slider = ({ label, min, max, from }: { label: string; min: string; max: string; from: number }) => (
  <div>
    <FilterLabel $h={24}>{label}</FilterLabel>
    <SliderRow>
      <span>{min}</span>
      <svg width="282" height="12" viewBox="0 0 282 12">
        <rect x={from + 8} y="4" width={262 - from} height="4" fill="#b2b2b2" />
        <path d={`M${from + 8} .5H${from + 5}Q${from} 1 ${from} 6Q${from} 11 ${from + 5} 11.5H${from + 8}Z`} fill="#fff" stroke="#555" />
        <path d="M269.5 .5H272.500Q277.500 1 277.500 6Q277.500 11 272.500 11.5H269.500Z" fill="#fff" stroke="#555" />
      </svg>
      <span>{max}</span>
    </SliderRow>
  </div>
);

export default function App() {
  return (
    <>
      <GlobalStyle />
      <Page>
        <Banner>
          <svg width="13" height="14" viewBox="0 0 13 14" fill="none" stroke="#0f6a99" strokeWidth="1.1">
            <path d="M.6 4.500H5.500L10.300 1.500V10.500L5.500 8.500H.6Z M5.500 4.500V8.500 M2.500 8.500V12.500H4.200V8.500 M11.600 4.500V7.500" />
          </svg>
          <BannerTitle>Tableau Desktop Public Edition</BannerTitle>
          <BannerLink>Buy Tableau</BannerLink>
        </Banner>

        <Dashboard>
          <FilterColumn>
            <Title $h={40} $lh={43} $size={22.8} $w={449}>Filter</Title>
            <FilterLabel $h={29} $ls={-0.22}>Select Month From Dropdown And Day From Calender</FilterLabel>
            <Select>March 2015<SelectArrow /></Select>
            <Calendar>
              <WeekHead>{["Sun", "Mon", "Tue", "Wed", "Thu", "Fri", "Sat"].map((d) => <span key={d}>{d}</span>)}</WeekHead>
              <Days>{dayColors.map((c, i) => <Day key={i} $bg={c} $dark={[6, 7, 28].includes(i)}>{i + 1}</Day>)}</Days>
            </Calendar>
            <Sliders>
              <Slider label="Select Sqft Lot" min="746" max="1651359" from={4.5} />
              <Slider label="Select Sqft Living" min="370" max="7480" from={7.5} />
              <Slider label="Select Yr Built" min="1900" max="2015" from={4.5} />
            </Sliders>
          </FilterColumn>

          <CenterColumn>
            <Title $h={46} $lh={46} $size={25.5} $ls={0.15}>Queen County Sales Dashboard</Title>
            <Title $h={52} $lh={50} $size={24.5} $ls={-0.2} $color={STEEL}>Daily Average House Sales Price</Title>
            <Panel $h={447} $bg="#eef7fa"><LineChart /></Panel>
            <Title $h={57} $lh={58} $ls={-0.32}>Distribution of Prices Historgram</Title>
            <Panel $h={217}><PriceChart /></Panel>
            <Title $h={57} $lh={58} $ls={-0.4}>Distribution of Bathrooms</Title>
            <Panel $h={217}><BathChart /></Panel>
          </CenterColumn>

          <RightColumn>
            <Title $h={53} $lh={52} $ls={-0.4} $color="#333">Map</Title>
            <Panel $h={491}><MapView /></Panel>
            <Title $h={57} $lh={60} $w={481} $ls={-0.48} $color="#333">View Vs Condition Heatmap</Title>
            <Heat>
              <HeatHead>
                <span />
                <HeadSort>Poor- ..
                  <svg width="10" height="10" viewBox="0 0 10 10"><path d="M0 1H3M0 5H6.5M0 9H10" stroke="#555" strokeWidth="1.6" /></svg>
                </HeadSort>
                <span>Very Good</span><span>Good</span><span>Average</span><span>Fair- Badl..</span>
              </HeatHead>
              {heatRows.map(([name, cells], i) => (
                <HeatRow key={name} $first={i === 0}>
                  <HeatName>{name}
                    {i === 0 && <svg width="11" height="11" viewBox="0 0 11 11"><path d="M1 11V8M5.3 11V4.5M9.7 11V1" stroke="#666" strokeWidth="1.8" /></svg>}
                  </HeatName>
                  {cells.map((c, j) => <HeatCell key={j} $bg={c?.[1]} $light={c?.[2]}>{c?.[0]}</HeatCell>)}
                </HeatRow>
              ))}
            </Heat>
            <Title $h={57} $lh={58} $dx={5} $ls={-0.42}>Distribution of Bedrooms</Title>
            <Panel $h={217}><BedChart /></Panel>
          </RightColumn>
        </Dashboard>

        <TabBar>
          <Tab $w={246} $ls={-0.12}>Daily Average House Sales Price</Tab>
          <Tab $w={46}>Map</Tab>
          <Tab $w={250}>Distribution of Prices Historgram</Tab>
          <Tab $w={201} $ls={-0.24}>Distribution of Bedrooms</Tab>
          <Tab $w={201} $ls={-0.24}>Distribution of Bathrooms</Tab>
          <Tab $w={82}>Heatmap</Tab>
          <Tab $w={80} $ls={-0.1}>Calender</Tab>
          <Tab $w={124} $active $ls={-0.12}>
            <svg width="12" height="12" viewBox="0 0 12 12" fill="none" stroke="#444"><path d="M.5 .5H10.5V10.5H.5Z M5.5 .5V10.5M.5 5.5H10.5" /></svg>
            Dashboard 1
          </Tab>
          <TabTools>
            <svg width="128" height="16" viewBox="0 0 128 16">
              <path d="M0 2H11V9H0Z M0 10H3V13H0Z M4 10H7V13H4Z M8 10H11V13H8Z" fill="#a3adb0" />
              <path d="M23 2H34V13H23Z" fill="#666" />
              <path d="M52 3.5V11.5L48 7.5Z" fill="#555" />
              <path d="M70 3.5V11.5L74 7.5Z" fill="#a3adb0" />
              <path d="M86.500 6V2.500H90M96.500 2.500H99.500V6M99.500 9.500V12.500H96.500M90 12.500H86.500V9.500" fill="none" stroke="#555" strokeWidth="1.3" />
              <path d="M108 2.500H121M109.500 3V9.500H119.500V3M114.500 1V2M114.500 9.500V12.500M112 13H117" fill="none" stroke="#555" strokeWidth="1.3" />
            </svg>
          </TabTools>
        </TabBar>
      </Page>
    </>
  );
}
